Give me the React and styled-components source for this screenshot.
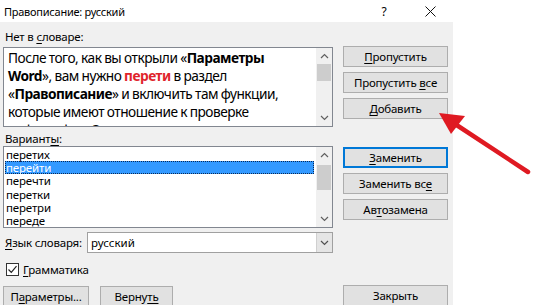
import React from "react";
import styled, { createGlobalStyle } from "styled-components";

const Global = createGlobalStyle`
  html, body { margin: 0; padding: 0; background: #ffffff; }
  body { font-family: "Noto Sans", "Segoe UI", sans-serif; color: #000; overflow: hidden; }
  * { box-sizing: border-box; }
`;

const Page = styled.div`
  position: relative;
  width: 536px;
  height: 305px;
  overflow: hidden;
  background: #fff;
`;

const Dialog = styled.div`
  width: 453px;
  height: 305px;
  display: flex;
  flex-direction: column;
`;

const TitleBar = styled.div`
  height: 22px;
  background: #fff;
  display: flex;
  align-items: center;
  padding-left: 4px;
  font-size: 11px;
  color: #000;
`;

const TitleText = styled.span`
  flex: 1;
  letter-spacing: -0.25px;
`;

const TitleIcon = styled.span`
  width: 46px;
  height: 22px;
  display: flex;
  align-items: center;
  justify-content: center;
  font-size: 12px;
`;

const Body = styled.div`
  flex: 1;
  background: #f0f0f0;
  display: flex;
  gap: 10px;
  padding: 0 5px 0 3px;
`;

const LeftCol = styled.div`
  width: 330px;
  display: flex;
  flex-direction: column;
`;

const RightCol = styled.div`
  width: 105px;
  display: flex;
  flex-direction: column;
  padding-top: 24px;
`;

const Label = styled.div`
  font-size: 11.5px;
  letter-spacing: -0.2px;
  height: ${(p) => p.$h}px;
  padding-top: ${(p) => p.$pt}px;
  padding-left: 2px;
  line-height: 14px;
  white-space: nowrap;
`;

const U = styled.u`
  text-underline-offset: 2px;
  text-decoration-thickness: 1px;
`;

const TextBox = styled.div`
  height: 80px;
  background: #fff;
  border: 1px solid #828790;
  display: flex;
  overflow: hidden;
`;

const TextContent = styled.div`
  flex: 1;
  height: 78px;
  padding: 1px 0 0 4px;
  font-size: 13.7px;
  line-height: 18px;
  white-space: nowrap;
  overflow: hidden;
  letter-spacing: -0.5px;
  word-spacing: -0.3px;
`;

const B = styled.b`
  font-weight: 700;
  color: ${(p) => (p.$red ? "#e0242b" : "#000")};
`;

const ScrollBar = styled.div`
  width: 16px;
  background: #f0f0f0;
  display: flex;
  flex-direction: column;
  align-items: stretch;
`;

const Arrow = styled.div`
  height: 16px;
  display: flex;
  align-items: center;
  justify-content: center;
`;

const Track = styled.div`
  flex: 1;
  padding-top: ${(p) => p.$top}px;
`;

const Thumb = styled.div`
  height: ${(p) => p.$h}px;
  background: #cdcdcd;
  margin: 0 1px;
`;

const ListBox = styled.div`
  height: 82px;
  background: #fff;
  border: 1px solid #828790;
  display: flex;
  overflow: hidden;
`;

const ListItems = styled.div`
  flex: 1;
  padding: 1px 2px 0 1px;
  font-size: 11.5px;
`;

const Item = styled.div`
  height: 13.2px;
  line-height: 13px;
  padding-left: 1px;
  letter-spacing: -0.15px;
  white-space: nowrap;
  color: ${(p) => (p.$sel ? "#fff" : "#000")};
  background: ${(p) => (p.$sel ? "#3399ff" : "transparent")};
  outline: ${(p) => (p.$sel ? "1px dotted #0b2a55" : "none")};
  outline-offset: -1px;
`;

const LangRow = styled.div`
  margin-top: 4px;
  height: 21px;
  display: flex;
  align-items: center;
`;

const LangLabel = styled.div`
  width: 84px;
  font-size: 11.5px;
  letter-spacing: -0.2px;
  padding-left: 2px;
  white-space: nowrap;
`;

const Combo = styled.div`
  flex: 1;
  height: 21px;
  background: #fff;
  border: 1px solid #a0a0a0;
  display: flex;
  font-size: 11.5px;
`;

const ComboText = styled.div`
  flex: 1;
  padding-left: 3px;
  line-height: 19px;
`;

const ComboBtn = styled.div`
  width: 16px;
  background: #e5e5e5;
  border-left: 1px solid #d0d0d0;
  display: flex;
  align-items: center;
  justify-content: center;
`;

const CheckRow = styled.div`
  margin-top: 10px;
  height: 13px;
  display: flex;
  align-items: center;
  gap: 4px;
  font-size: 11.5px;
  letter-spacing: -0.2px;
  padding-left: 3px;
`;

const CheckBox = styled.div`
  width: 13px;
  height: 13px;
  background: #fff;
  border: 1px solid #333;
  display: flex;
  align-items: center;
  justify-content: center;
`;

const BottomRow = styled.div`
  margin-top: 10px;
  display: flex;
  gap: 11px;
`;

const Button = styled.div`
  width: ${(p) => p.$w || 105}px;
  height: 21px;
  flex-shrink: 0;
  margin-top: ${(p) => p.$mt || 0}px;
  background: #e1e1e1;
  border: ${(p) => (p.$def ? "2px solid #0078d7" : "1px solid #adadad")};
  text-align: center;
  font-size: 11.5px;
  letter-spacing: -0.2px;
  line-height: ${(p) => (p.$def ? 17 : 19)}px;
  white-space: nowrap;
`;

const Overlay = styled.svg`
  position: absolute;
  left: 0;
  top: 0;
  pointer-events: none;
`;

const Up = () => (
  <svg width="9" height="6" viewBox="0 0 9 6">
    <path d="M1 5 L4.5 1.5 L8 5" fill="none" stroke="#606060" strokeWidth="1.2" />
  </svg>
);
const Down = ({ c = "#606060" }) => (
  <svg width="9" height="6" viewBox="0 0 9 6">
    <path d="M1 1 L4.5 4.5 L8 1" fill="none" stroke={c} strokeWidth="1.2" />
  </svg>
);

export default function App() {
  return (
    <Page>
      <Global />
      <Dialog>
        <TitleBar>
          <TitleText>Правописание: русский</TitleText>
          <TitleIcon>?</TitleIcon>
          <TitleIcon>
            <svg width="11" height="11" viewBox="0 0 11 11">
              <path d="M0.5 0.5 L10.5 10.5 M10.5 0.5 L0.5 10.5" stroke="#111" strokeWidth="1" />
            </svg>
          </TitleIcon>
        </TitleBar>
        <Body>
          <LeftCol>
            <Label $h={25} $pt={8}>
              Нет в <U>с</U>ловаре:
            </Label>
            <TextBox>
              <TextContent>
                <div>
                  После того, как вы открыли «<B>Параметры</B>
                </div>
                <div>
                  <B>Word</B>», вам нужно <B $red>перети</B> в раздел
                </div>
                <div>
                  «<B>Правописание</B>» и включить там функции,
                </div>
                <div>которые имеют отношение к проверке</div>
                <div>орфографии. Это</div>
              </TextContent>
              <ScrollBar>
                <Arrow>
                  <Up />
                </Arrow>
                <Track $top={0}>
                  <Thumb $h={17} />
                </Track>
                <Arrow>
                  <Down />
                </Arrow>
              </ScrollBar>
            </TextBox>
            <Label $h={19} $pt={5}>
              Вариант<U>ы</U>:
            </Label>
            <ListBox>
              <ListItems>
                <Item>перетих</Item>
                <Item $sel>перейти</Item>
                <Item>перечти</Item>
                <Item>перетки</Item>
                <Item>перетри</Item>
                <Item>переде</Item>
              </ListItems>
              <ScrollBar>
                <Arrow>
                  <Up />
                </Arrow>
                <Track $top={2}>
                  <Thumb $h={25} />
                </Track>
                <Arrow>
                  <Down />
                </Arrow>
              </ScrollBar>
            </ListBox>
            <LangRow>
              <LangLabel>
                <U>Я</U>зык словаря:
              </LangLabel>
              <Combo>
                <ComboText>русский</ComboText>
                <ComboBtn>
                  <Down c="#505050" />
                </ComboBtn>
              </Combo>
            </LangRow>
            <CheckRow>
              <CheckBox>
                <svg width="11" height="11" viewBox="0 0 11 11">
                  <path d="M1.5 5.5 L4.3 8.3 L9.5 2.2" fill="none" stroke="#222" strokeWidth="1.2" />
                </svg>
              </CheckBox>
              <span>
                <U>Г</U>рамматика
              </span>
            </CheckRow>
            <BottomRow>
              <Button $w={86}>
                П<U>а</U>раметры...
              </Button>
              <Button $w={73}>
                Верну<U>ть</U>
              </Button>
            </BottomRow>
          </LeftCol>
          <RightCol>
            <Button>
              <U>П</U>ропустить
            </Button>
            <Button $mt={5}>
              Пропустить <U>в</U>се
            </Button>
            <Button $mt={5}>
              <U>Д</U>обавить
            </Button>
            <Button $mt={28} $def>
              <U>З</U>аменить
            </Button>
            <Button $mt={5}>
              Заменить вс<U>е</U>
            </Button>
            <Button $mt={5}>
              Ав<U>т</U>озамена
            </Button>
            <Button $mt={65}>Закрыть</Button>
          </RightCol>
        </Body>
      </Dialog>
      <Overlay width="536" height="305" viewBox="0 0 536 305">
        <line x1="528" y1="172" x2="452" y2="122" stroke="#df1a22" strokeWidth="4.5" strokeLinecap="round" />
        <polygon points="439,113 465,116 451,134" fill="#df1a22" />
      </Overlay>
    </Page>
  );
}
